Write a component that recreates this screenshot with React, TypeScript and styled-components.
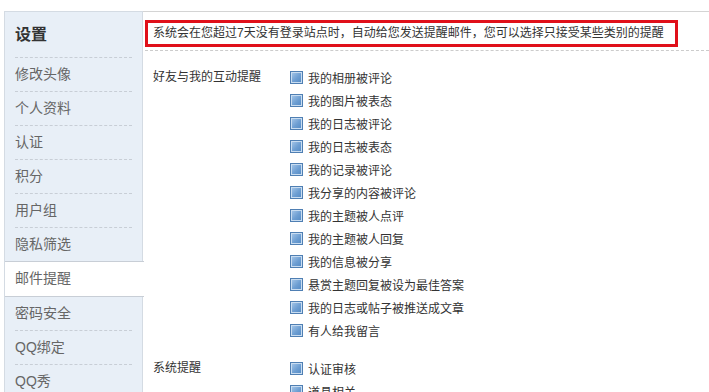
import styled, { createGlobalStyle } from 'styled-components';

const GlobalStyle = createGlobalStyle`
  body {
    margin: 0;
    background: #fff;
    font-family: "Liberation Sans", "Noto Sans CJK SC", sans-serif;
    font-size: 12px;
    color: #333;
  }
`;

const menu = ['修改头像', '个人资料', '认证', '积分', '用户组', '隐私筛选', '邮件提醒', '密码安全', 'QQ绑定', 'QQ秀'];

const sections = [
  {
    title: '好友与我的互动提醒',
    items: [
      '我的相册被评论',
      '我的图片被表态',
      '我的日志被评论',
      '我的日志被表态',
      '我的记录被评论',
      '我分享的内容被评论',
      '我的主题被人点评',
      '我的主题被人回复',
      '我的信息被分享',
      '悬赏主题回复被设为最佳答案',
      '我的日志或帖子被推送成文章',
      '有人给我留言',
    ],
  },
  {
    title: '系统提醒',
    items: ['认证审核', '道具相关'],
  },
];

function App() {
  return (
    <>
      <GlobalStyle />
      <Page>
        <Sidebar>
          <SideTitle>设置</SideTitle>
          {menu.map((m) => (
            <NavItem key={m} active={m === '邮件提醒'}>
              <NavLabel active={m === '邮件提醒'}>{m}</NavLabel>
            </NavItem>
          ))}
        </Sidebar>
        <Main>
          <NoticeRow>
            <Notice>系统会在您超过7天没有登录站点时，自动给您发送提醒邮件，您可以选择只接受某些类别的提醒</Notice>
          </NoticeRow>
          {sections.map((s) => (
            <Section key={s.title}>
              <SectionTitle>{s.title}</SectionTitle>
              <Options>
                {s.items.map((i) => (
                  <Option key={i}>
                    <Check />
                    {i}
                  </Option>
                ))}
              </Options>
            </Section>
          ))}
        </Main>
      </Page>
    </>
  );
}

export default App;

const Page = styled.div`
  display: flex;
  align-items: flex-start;
  padding: 11px 0 0 4px;
  height: 392px;
  box-sizing: border-box;
  overflow: hidden;
`;

const Sidebar = styled.div`
  width: 137px;
  flex-shrink: 0;
  background: #e8eff7;
  border: 1px solid #d4dbe3;
  border-bottom: none;
  min-height: 400px;
`;

const SideTitle = styled.div`
  height: 45px;
  line-height: 45px;
  margin: 0 10px;
  border-bottom: 1px dashed #c8ced6;
  font-size: 16px;
  font-weight: bold;
  color: #333;
`;

const NavItem = styled.div<{ active?: boolean }>`
  background: ${(p) => (p.active ? '#fff' : 'transparent')};
  margin-right: ${(p) => (p.active ? '-2px' : '0')};
  border-top: ${(p) => (p.active ? '1px solid #c8ced6' : 'none')};
  border-bottom: ${(p) => (p.active ? '1px solid #c8ced6' : 'none')};
  margin-top: ${(p) => (p.active ? '-1px' : '0')};
  position: relative;
`;

const NavLabel = styled.div<{ active?: boolean }>`
  margin: 0 10px;
  height: 33px;
  line-height: 33px;
  font-size: 14px;
  color: #666;
  border-bottom: ${(p) => (p.active ? '1px solid transparent' : '1px dashed #c8ced6')};
`;

const Main = styled.div`
  flex: 1;
  border-top: 1px solid #d4d4d4;
  padding-left: 2px;
`;

const NoticeRow = styled.div`
  padding-top: 8px;
  padding-bottom: 3px;
  border-bottom: 1px dashed #ccc;
`;

const Notice = styled.div`
  display: inline-block;
  white-space: nowrap;
  border: 3px solid #e0101a;
  padding: 0 11px 0 5px;
  height: 21px;
  line-height: 21px;
  color: #333;
  font-size: 12px;
`;

const Section = styled.div`
  display: flex;
  padding: 15px 0 0 8px;
`;

const SectionTitle = styled.div`
  width: 137px;
  line-height: 23px;
  color: #333;
`;

const Options = styled.div`
  display: flex;
  flex-direction: column;
`;

const Option = styled.div`
  display: flex;
  align-items: center;
  height: 23px;
  color: #333;
`;

const Check = styled.span`
  display: inline-block;
  width: 11px;
  height: 11px;
  margin-right: 5px;
  border: 1px solid #4f7fb3;
  background: linear-gradient(135deg, #a9c9ea 0%, #6d9ed2 55%, #5289c4 100%);
  box-shadow: inset 0 0 0 1px #c9ddf1;
`;
